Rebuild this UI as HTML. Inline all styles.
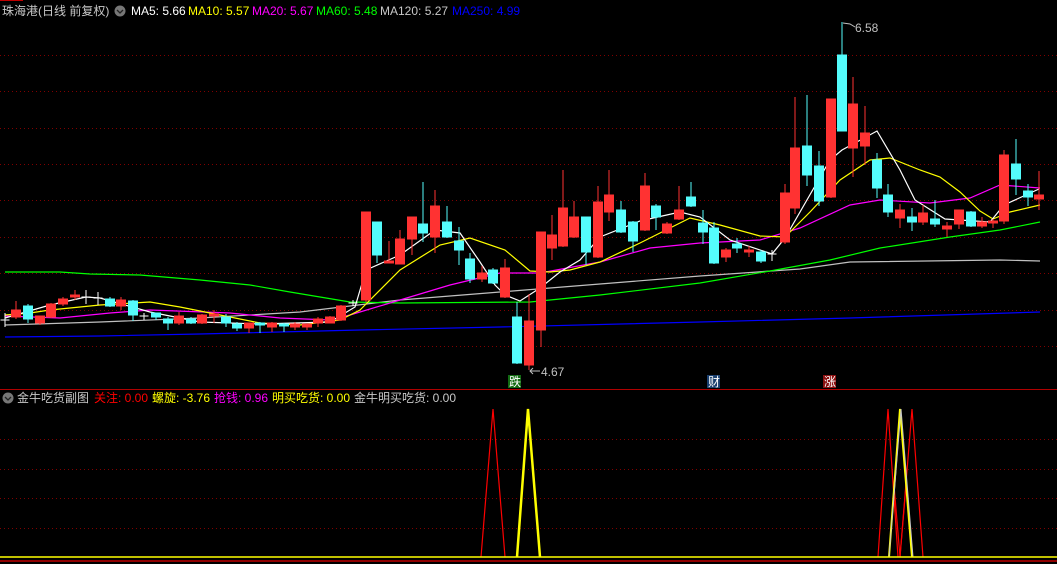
<!DOCTYPE html>
<html><head><meta charset="utf-8"><style>
html,body{margin:0;padding:0;background:#000;width:1057px;height:564px;overflow:hidden}
svg{display:block}
text{font-family:"Liberation Sans","Noto Sans CJK SC",sans-serif;font-size:12px}
</style></head><body>
<svg width="1057" height="564" viewBox="0 0 1057 564" xmlns="http://www.w3.org/2000/svg">
<rect width="1057" height="564" fill="#000"/>
<line x1="0" y1="0.5" x2="23" y2="0.5" stroke="#c00000"/>
<g stroke="#800000" stroke-dasharray="1 3">
<line x1="0" y1="55.5" x2="1057" y2="55.5"/><line x1="0" y1="91.5" x2="1057" y2="91.5"/>
<line x1="0" y1="128.5" x2="1057" y2="128.5"/><line x1="0" y1="164.5" x2="1057" y2="164.5"/>
<line x1="0" y1="200.5" x2="1057" y2="200.5"/><line x1="0" y1="237.5" x2="1057" y2="237.5"/>
<line x1="0" y1="273.5" x2="1057" y2="273.5"/><line x1="0" y1="310.5" x2="1057" y2="310.5"/>
<line x1="0" y1="346.5" x2="1057" y2="346.5"/>
<line x1="0" y1="439.5" x2="1057" y2="439.5"/><line x1="0" y1="469.5" x2="1057" y2="469.5"/>
<line x1="0" y1="498.5" x2="1057" y2="498.5"/><line x1="0" y1="528.5" x2="1057" y2="528.5"/>
</g>
<g fill="none" stroke-width="1.2">
<polyline stroke="#0000ff" points="5,337 100,336 200,334 360,330 500,327 700,322 850,318 1040,312"/>
<polyline stroke="#c0c0c0" points="5,325 100,322 200,318 300,312 400,300 500,292 600,284 700,276 800,269 850,262 1000,260 1040,261"/>
<polyline stroke="#00ff00" points="5,272 60,272 90,274 140,275 200,280 250,285 290,292 320,297 350,302 400,303 530,302 600,295 700,283 770,271 830,260 880,248 950,237 1000,230 1040,222"/>
<polyline stroke="#ff00ff" points="5,316 60,318 110,313 150,310 230,313 280,318 330,320 350,315 400,300 450,285 500,273 540,273 600,262 650,248 700,243 760,240 800,228 850,205 880,200 930,203 970,198 1000,185 1040,188"/>
<polyline stroke="#ffff00" points="5,315 30,313 50,310 70,308 100,305 150,302 180,307 200,311 230,317 260,323 300,325 340,320 360,310 400,270 440,245 470,238 505,250 530,271 550,272 570,270 600,262 640,243 690,218 720,225 760,236 785,237 810,212 840,180 870,160 890,158 920,170 940,177 960,192 980,211 993,219 1010,212 1040,205"/>
<polyline stroke="#ffffff" points="5,318 50,305 86,297 100,298 150,312 200,322 260,324 330,322 355,307 366,270 400,255 435,230 460,233 480,262 495,285 505,295 520,301 540,288 560,272 580,260 600,237 640,221 680,212 700,217 730,240 772,254 785,238 830,160 842,150 877,131 900,170 915,200 945,219 990,222 1004,205 1039,189"/>
</g>
<g stroke-width="1">
<g stroke="#fff"><line x1="5" y1="313" x2="5" y2="327"/><line x1="0.5" y1="320" x2="9.5" y2="320"/>
<line x1="86" y1="290" x2="86" y2="304"/><line x1="81.5" y1="297" x2="90.5" y2="297"/>
<line x1="98" y1="292" x2="98" y2="305"/><line x1="93.5" y1="298" x2="102.5" y2="298"/>
<line x1="144" y1="313" x2="144" y2="320"/><line x1="139.5" y1="316" x2="148.5" y2="316"/>
<line x1="353" y1="300" x2="353" y2="306"/><line x1="348.5" y1="303" x2="357.5" y2="303"/>
<line x1="772" y1="250" x2="772" y2="261"/><line x1="767.5" y1="254" x2="776.5" y2="254"/></g>
<g stroke="#ff3232" fill="#ff3232">
<line x1="16" y1="301" x2="16" y2="319"/><rect x="11.5" y="310" width="9" height="7"/>
<line x1="40" y1="316" x2="40" y2="325"/><rect x="35.5" y="316" width="9" height="7"/>
<line x1="51" y1="303" x2="51" y2="318"/><rect x="46.5" y="304" width="9" height="13"/>
<line x1="63" y1="297" x2="63" y2="306"/><rect x="58.5" y="299" width="9" height="5"/>
<line x1="75" y1="290" x2="75" y2="300"/><rect x="70.5" y="295" width="9" height="2"/>
<line x1="121" y1="297" x2="121" y2="310"/><rect x="116.5" y="300" width="9" height="6"/>
<line x1="179" y1="312" x2="179" y2="325"/><rect x="174.5" y="316" width="9" height="7"/>
<line x1="202" y1="314" x2="202" y2="324"/><rect x="197.5" y="315" width="9" height="8"/>
<line x1="214" y1="310" x2="214" y2="323"/><rect x="209.5" y="314" width="9" height="2"/>
<line x1="249" y1="323" x2="249" y2="333"/><rect x="244.5" y="323" width="9" height="5"/>
<line x1="272" y1="322" x2="272" y2="332"/><rect x="267.5" y="323" width="9" height="4"/>
<line x1="295" y1="322" x2="295" y2="330"/><rect x="290.5" y="324" width="9" height="3"/>
<line x1="307" y1="324" x2="307" y2="330"/><rect x="302.5" y="324" width="9" height="3"/>
<line x1="318" y1="317" x2="318" y2="327"/><rect x="313.5" y="319" width="9" height="4"/>
<line x1="330" y1="316" x2="330" y2="323"/><rect x="325.5" y="317" width="9" height="6"/>
<line x1="341" y1="305" x2="341" y2="321"/><rect x="336.5" y="306" width="9" height="14"/>
<line x1="366" y1="212" x2="366" y2="302"/><rect x="361.5" y="212" width="9" height="88"/>
<line x1="389" y1="241" x2="389" y2="263"/><rect x="384.5" y="261" width="9" height="2"/>
<line x1="400" y1="230" x2="400" y2="264"/><rect x="395.5" y="239" width="9" height="25"/>
<line x1="412" y1="217" x2="412" y2="255"/><rect x="407.5" y="217" width="9" height="22"/>
<line x1="435" y1="190" x2="435" y2="253"/><rect x="430.5" y="206" width="9" height="31"/>
<line x1="482" y1="266" x2="482" y2="282"/><rect x="477.5" y="273" width="9" height="6"/>
<line x1="505" y1="259" x2="505" y2="298"/><rect x="500.5" y="268" width="9" height="29"/>
<line x1="529" y1="294" x2="529" y2="370"/><rect x="524.5" y="321" width="9" height="44"/>
<line x1="541" y1="232" x2="541" y2="347"/><rect x="536.5" y="232" width="9" height="98"/>
<line x1="552" y1="215" x2="552" y2="260"/><rect x="547.5" y="235" width="9" height="13"/>
<line x1="563" y1="170" x2="563" y2="247"/><rect x="558.5" y="208" width="9" height="38"/>
<line x1="574" y1="201" x2="574" y2="238"/><rect x="569.5" y="217" width="9" height="20"/>
<line x1="598" y1="186" x2="598" y2="258"/><rect x="593.5" y="202" width="9" height="55"/>
<line x1="609" y1="170" x2="609" y2="221"/><rect x="604.5" y="195" width="9" height="17"/>
<line x1="645" y1="173" x2="645" y2="231"/><rect x="640.5" y="186" width="9" height="44"/>
<line x1="667" y1="222" x2="667" y2="234"/><rect x="662.5" y="224" width="9" height="9"/>
<line x1="679" y1="186" x2="679" y2="220"/><rect x="674.5" y="210" width="9" height="9"/>
<line x1="726" y1="248" x2="726" y2="262"/><rect x="721.5" y="250" width="9" height="7"/>
<line x1="749" y1="246" x2="749" y2="257"/><rect x="744.5" y="250" width="9" height="2"/>
<line x1="785" y1="184" x2="785" y2="244"/><rect x="780.5" y="193" width="9" height="49"/>
<line x1="795" y1="97" x2="795" y2="214"/><rect x="790.5" y="148" width="9" height="60"/>
<line x1="831" y1="99" x2="831" y2="198"/><rect x="826.5" y="99" width="9" height="98"/>
<line x1="853" y1="77" x2="853" y2="177"/><rect x="848.5" y="104" width="9" height="44"/>
<line x1="865" y1="106" x2="865" y2="165"/><rect x="860.5" y="133" width="9" height="13"/>
<line x1="900" y1="204" x2="900" y2="228"/><rect x="895.5" y="210" width="9" height="8"/>
<line x1="923" y1="205" x2="923" y2="225"/><rect x="918.5" y="213" width="9" height="9"/>
<line x1="947" y1="222" x2="947" y2="237"/><rect x="942.5" y="226" width="9" height="3"/>
<line x1="959" y1="210" x2="959" y2="229"/><rect x="954.5" y="210" width="9" height="14"/>
<line x1="982" y1="217" x2="982" y2="228"/><rect x="977.5" y="222" width="9" height="4"/>
<line x1="993" y1="219" x2="993" y2="228"/><rect x="988.5" y="221" width="9" height="2"/>
<line x1="1004" y1="150" x2="1004" y2="224"/><rect x="999.5" y="155" width="9" height="66"/>
<line x1="1039" y1="171" x2="1039" y2="210"/><rect x="1034.5" y="195" width="9" height="4"/>
</g>
<g stroke="#54fcfc" fill="#54fcfc">
<line x1="28" y1="304" x2="28" y2="323"/><rect x="23.5" y="306" width="9" height="13"/>
<line x1="110" y1="297" x2="110" y2="307"/><rect x="105.5" y="299" width="9" height="7"/>
<line x1="133" y1="300" x2="133" y2="321"/><rect x="128.5" y="301" width="9" height="14"/>
<line x1="156" y1="313" x2="156" y2="320"/><rect x="151.5" y="313" width="9" height="4"/>
<line x1="168" y1="317" x2="168" y2="330"/><rect x="163.5" y="319" width="9" height="4"/>
<line x1="191" y1="317" x2="191" y2="324"/><rect x="186.5" y="319" width="9" height="4"/>
<line x1="226" y1="314" x2="226" y2="327"/><rect x="221.5" y="317" width="9" height="6"/>
<line x1="237" y1="322" x2="237" y2="331"/><rect x="232.5" y="324" width="9" height="4"/>
<line x1="260" y1="322" x2="260" y2="333"/><rect x="255.5" y="323" width="9" height="2"/>
<line x1="284" y1="323" x2="284" y2="332"/><rect x="279.5" y="324" width="9" height="2"/>
<line x1="377" y1="222" x2="377" y2="263"/><rect x="372.5" y="222" width="9" height="33"/>
<line x1="423" y1="182" x2="423" y2="242"/><rect x="418.5" y="224" width="9" height="9"/>
<line x1="447" y1="206" x2="447" y2="238"/><rect x="442.5" y="222" width="9" height="15"/>
<line x1="459" y1="227" x2="459" y2="265"/><rect x="454.5" y="241" width="9" height="9"/>
<line x1="470" y1="253" x2="470" y2="283"/><rect x="465.5" y="259" width="9" height="20"/>
<line x1="493" y1="268" x2="493" y2="284"/><rect x="488.5" y="270" width="9" height="13"/>
<line x1="517" y1="302" x2="517" y2="364"/><rect x="512.5" y="317" width="9" height="46"/>
<line x1="586" y1="217" x2="586" y2="265"/><rect x="581.5" y="217" width="9" height="35"/>
<line x1="621" y1="201" x2="621" y2="233"/><rect x="616.5" y="210" width="9" height="22"/>
<line x1="633" y1="221" x2="633" y2="252"/><rect x="628.5" y="222" width="9" height="19"/>
<line x1="656" y1="204" x2="656" y2="230"/><rect x="651.5" y="206" width="9" height="11"/>
<line x1="691" y1="182" x2="691" y2="207"/><rect x="686.5" y="197" width="9" height="9"/>
<line x1="703" y1="210" x2="703" y2="244"/><rect x="698.5" y="223" width="9" height="9"/>
<line x1="714" y1="222" x2="714" y2="264"/><rect x="709.5" y="228" width="9" height="35"/>
<line x1="737" y1="238" x2="737" y2="253"/><rect x="732.5" y="244" width="9" height="4"/>
<line x1="761" y1="250" x2="761" y2="263"/><rect x="756.5" y="252" width="9" height="9"/>
<line x1="807" y1="95" x2="807" y2="186"/><rect x="802.5" y="146" width="9" height="29"/>
<line x1="819" y1="151" x2="819" y2="206"/><rect x="814.5" y="166" width="9" height="35"/>
<line x1="842" y1="22" x2="842" y2="131"/><rect x="837.5" y="55" width="9" height="76"/>
<line x1="877" y1="153" x2="877" y2="198"/><rect x="872.5" y="160" width="9" height="28"/>
<line x1="888" y1="184" x2="888" y2="217"/><rect x="883.5" y="195" width="9" height="17"/>
<line x1="912" y1="208" x2="912" y2="231"/><rect x="907.5" y="217" width="9" height="5"/>
<line x1="935" y1="200" x2="935" y2="227"/><rect x="930.5" y="219" width="9" height="5"/>
<line x1="971" y1="211" x2="971" y2="227"/><rect x="966.5" y="212" width="9" height="14"/>
<line x1="1016" y1="139" x2="1016" y2="195"/><rect x="1011.5" y="164" width="9" height="15"/>
<line x1="1028" y1="184" x2="1028" y2="206"/><rect x="1023.5" y="191" width="9" height="6"/>
</g>
</g>
<path d="M843 23 L850 24 L855 27" stroke="#c0c0c0" fill="none"/>
<text x="855" y="32" fill="#c0c0c0">6.58</text>
<path d="M530 371 L540 371 M533 368 L530 371 L533 374" stroke="#c0c0c0" fill="none"/>
<text x="541" y="376" fill="#c0c0c0">4.67</text>
<rect x="508" y="375" width="13" height="13" fill="#126a12"/><text x="509" y="386" fill="#fff">跌</text>
<rect x="707" y="375" width="13" height="13" fill="#1a3f6e"/><text x="708" y="386" fill="#fff">财</text>
<rect x="823" y="375" width="13" height="13" fill="#8b1010"/><text x="824" y="386" fill="#fff">涨</text>
<line x1="0" y1="389.5" x2="1057" y2="389.5" stroke="#b00000"/>
<text x="2" y="15" fill="#c8c8c8">珠海港(日线 前复权)</text>
<circle cx="120" cy="11" r="5.5" fill="#777"/><path d="M117 10 L120 13 L123 10" stroke="#222" fill="none" stroke-width="1.3"/>
<text x="131" y="15" fill="#fff">MA5: 5.66</text>
<text x="188" y="15" fill="#ffff00">MA10: 5.57</text>
<text x="252" y="15" fill="#ff00ff">MA20: 5.67</text>
<text x="316" y="15" fill="#00ff00">MA60: 5.48</text>
<text x="380" y="15" fill="#c8c8c8">MA120: 5.27</text>
<text x="452" y="15" fill="#0000ff">MA250: 4.99</text>
<circle cx="8" cy="398" r="5.5" fill="#777"/><path d="M5 397 L8 400 L11 397" stroke="#222" fill="none" stroke-width="1.3"/>
<text x="17" y="402" fill="#c8c8c8">金牛吃货副图</text>
<text x="94" y="402" fill="#ff0000">关注: 0.00</text>
<text x="152" y="402" fill="#ffff00">螺旋: -3.76</text>
<text x="214" y="402" fill="#ff00ff">抢钱: 0.96</text>
<text x="272" y="402" fill="#ffff00">明买吃货: 0.00</text>
<text x="354" y="402" fill="#c8c8c8">金牛明买吃货: 0.00</text>
<g fill="none">
<polyline stroke="#ff0000" stroke-width="1.2" points="481,557 493,409 505,557"/>
<polyline stroke="#ff0000" stroke-width="1.2" points="878,557 888,409 898,557"/>
<polyline stroke="#ff0000" stroke-width="1.2" points="900,557 912,409 923,557"/>
<polyline stroke="#ff0000" stroke-width="1.2" points="894,485 900,557 906,485"/>
<polyline stroke="#ffff00" stroke-width="2.5" points="517,557 528,409 540,557"/>
<polyline stroke="#ffff00" stroke-width="2" points="889,557 900,409 912,557"/>
<polyline stroke="#c8c8c8" stroke-width="1" points="889,557 901,409 913,557"/>
<line x1="0" y1="557" x2="1057" y2="557" stroke="#ffff00" stroke-width="1.5"/>
<line x1="0" y1="561" x2="1057" y2="561" stroke="#c00000" stroke-width="1.5"/>
</g>
</svg>
</body></html>
